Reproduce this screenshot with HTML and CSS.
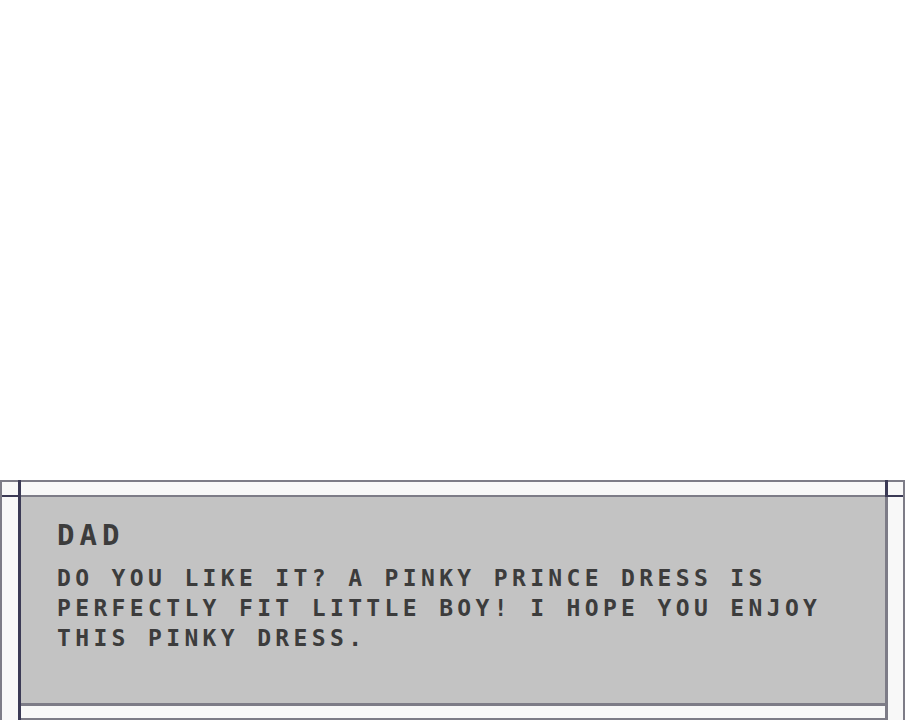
FILE: index.html
```html
<!DOCTYPE html>
<html lang="en">
<head>
<meta charset="utf-8">
<title>Dialog</title>
<link rel="stylesheet" href="styles.css">
</head>
<body>
<div class="scene"></div>
<div class="frame">
  <div class="side side-left"><div class="tick"></div></div>
  <div class="rail rail-left"></div>
  <div class="main">
    <div class="strip strip-top"></div>
    <div class="panel">
      <div class="name">DAD</div>
      <p class="text">DO YOU LIKE IT? A PINKY PRINCE DRESS IS PERFECTLY FIT LITTLE BOY! I HOPE YOU ENJOY THIS PINKY DRESS.</p>
    </div>
    <div class="strip strip-bottom"></div>
  </div>
  <div class="rail rail-right"><div class="rail-cap"></div></div>
  <div class="side side-right"><div class="tick"></div></div>
</div>
</body>
</html>
```
FILE: styles.css
```css
* { box-sizing: border-box; }
html, body {
  margin: 0;
  padding: 0;
  background: #ffffff;
  width: 906px;
  height: 720px;
  overflow: hidden;
}
.scene { height: 480px; }
.frame {
  display: flex;
  height: 240px;
  width: 906px;
}
.side {
  background: #f8f8f8;
  border-top: 2px solid #7d7c87;
  width: 18px;
}
.side-left { border-left: 2px solid #7d7c87; }
.side-right {
  border-right: 2px solid #7d7c87;
  margin-right: 1px;
  width: 17px;
}
.tick {
  margin-top: 13px;
  height: 2px;
  background: #3b3a55;
}
.rail { width: 3px; display: flex; flex-direction: column; }
.rail-left { background: #3b3a55; }
.rail-right { background: #7d7c87; }
.rail-cap { height: 17px; background: #3b3a55; }
.main {
  flex: 1;
  display: flex;
  flex-direction: column;
}
.strip { background: #f8f8f8; }
.strip-top {
  border-top: 2px solid #7d7c87;
  height: 15px;
}
.strip-bottom {
  border-bottom: 2px solid #7d7c87;
  height: 14px;
}
.panel {
  height: 211px;
  background: #c3c3c3;
  border-top: 2px solid #7d7c87;
  border-bottom: 3px solid #7d7c87;
  padding: 24px 0 0 36px;
  color: #3c3c3c;
  font-family: "DejaVu Sans Mono", "Liberation Mono", monospace;
  font-weight: bold;
}
.name {
  font-size: 29px;
  line-height: 29px;
  letter-spacing: 5px;
}
.text {
  margin: 13px 0 0;
  width: 800px;
  font-size: 23px;
  line-height: 30px;
  letter-spacing: 4.35px;
}
```
